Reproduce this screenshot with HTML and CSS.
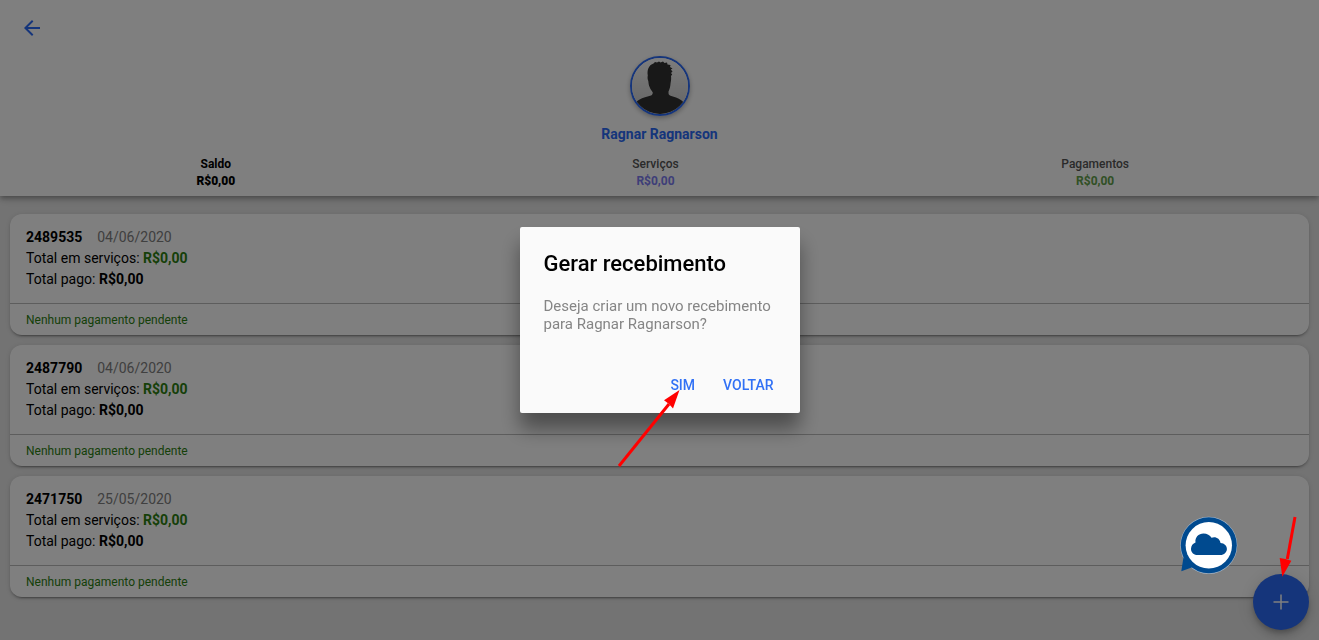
FILE: index.html
```html
<!DOCTYPE html>
<html lang="pt-BR">
<head>
  <meta charset="UTF-8">
  <meta name="viewport" content="width=device-width, initial-scale=1">
  <title>Ragnar Ragnarson</title>
  <link rel="stylesheet" href="styles.css">
</head>
<body>
  <header class="header">
    <div class="toolbar">
      <button class="back-button" type="button" aria-label="Voltar">
        <svg width="24" height="24" viewBox="0 0 24 24"><path d="M20 11H7.83l5.59-5.59L12 4l-8 8 8 8 1.41-1.41L7.83 13H20v-2z"/></svg>
      </button>
    </div>
    <div class="profile">
      <svg class="avatar" viewBox="0 0 56 56">
        <defs>
          <linearGradient id="avatar-bg" x1="0" y1="0" x2="0" y2="1">
            <stop offset="0" stop-color="#fafafa"/>
            <stop offset="1" stop-color="#c8c8c8"/>
          </linearGradient>
        </defs>
        <rect width="56" height="56" fill="url(#avatar-bg)"/>
        <path fill="#303030" d="M3 56V46C5 42 9 40.500 13 39.200L19 37.500C20.500 36.800 20.800 35.500 20.800 34.500C19.500 32.500 18.300 31 17.600 29C16.800 27.500 16.500 25 16.300 23C15.600 21.500 15.300 19.500 15.800 17.500C15 13 16.200 8.500 19.500 6.500L21.500 5.500L23 4L25 4.500L27 3.500L28.500 4.500L31 3.600L32.500 5L35 4.600L35.500 6.500L38.500 7L38 9L40.500 10.500L38.800 11.500L40.500 13.500L39 15L40.200 16.500L39 18C39.400 20 39 23.500 38.600 25C38.400 28 37.800 31 36.500 33.500V35C36.500 36.500 37.200 37.300 38.500 37.800L44 39.500C48 41 51 43 53 46V56Z"/>
      </svg>
      <h1 class="profile-name">Ragnar Ragnarson</h1>
    </div>
    <div class="stats">
      <div class="stat stat-balance"><span>Saldo</span><strong>R$0,00</strong></div>
      <div class="stat stat-services"><span>Serviços</span><strong>R$0,00</strong></div>
      <div class="stat stat-payments"><span>Pagamentos</span><strong>R$0,00</strong></div>
    </div>
  </header>

  <main class="list">
    <article class="card">
      <div class="card-body">
        <p><strong>2489535</strong><span class="date">04/06/2020</span></p>
        <p>Total em serviços: <strong class="green">R$0,00</strong></p>
        <p>Total pago: <strong>R$0,00</strong></p>
      </div>
      <div class="card-footer">Nenhum pagamento pendente</div>
    </article>
    <article class="card">
      <div class="card-body">
        <p><strong>2487790</strong><span class="date">04/06/2020</span></p>
        <p>Total em serviços: <strong class="green">R$0,00</strong></p>
        <p>Total pago: <strong>R$0,00</strong></p>
      </div>
      <div class="card-footer">Nenhum pagamento pendente</div>
    </article>
    <article class="card">
      <div class="card-body">
        <p><strong>2471750</strong><span class="date">25/05/2020</span></p>
        <p>Total em serviços: <strong class="green">R$0,00</strong></p>
        <p>Total pago: <strong>R$0,00</strong></p>
      </div>
      <div class="card-footer">Nenhum pagamento pendente</div>
    </article>
  </main>

  <button class="fab" type="button" aria-label="Adicionar">
    <svg width="16" height="16" viewBox="0 0 16 16"><path d="M8 0.500V15.500M0.500 8H15.500"/></svg>
  </button>

  <!-- Confirmation alert -->
  <div class="backdrop">
    <div class="alert" role="dialog" aria-modal="true" aria-labelledby="alert-title">
      <h2 class="alert-title" id="alert-title">Gerar recebimento</h2>
      <p class="alert-message">Deseja criar um novo recebimento para Ragnar Ragnarson?</p>
      <div class="alert-buttons">
        <button type="button">SIM</button>
        <button type="button">VOLTAR</button>
      </div>
      <svg class="arrow arrow-confirm" width="66" height="80" viewBox="0 0 66 80">
        <path class="arrow-line" d="M4 77L54 15"/>
        <path class="arrow-head" d="M64.500 1L49 11.300L54 15L58 19.500Z"/>
      </svg>
    </div>
  </div>

  <button class="chat-button" type="button" aria-label="Chat">
    <svg width="60" height="60" viewBox="0 0 60 60">
      <circle cx="29.800" cy="29.300" r="28.500" fill="#a9bccf"/>
      <path fill="#004a8f" d="M4.500 41L2.300 55.200L14 51Z"/>
      <circle cx="29.800" cy="29.300" r="28" fill="#004a8f"/>
      <circle cx="29.800" cy="29.300" r="23.200" fill="#fff"/>
      <path fill="#004a8f" d="M18.500 39C14.500 39 12 36.300 12 33C12 29.700 14 27.300 16.500 26.500C15.800 21.500 19.500 17.600 24.500 17.600C28 17.600 31 19.300 32.500 21.700C36.500 20 41 22.500 41.500 27C45.500 27.300 47.900 29.800 47.900 33C47.900 36.300 45 39 41.500 39Z"/>
    </svg>
  </button>

  <svg class="arrow arrow-fab" width="20" height="64" viewBox="0 0 20 64">
    <path class="arrow-line" d="M17 3L9.300 45"/>
    <path class="arrow-head" d="M4.300 62.700L1.700 44L7.500 45L13.300 46.700Z"/>
  </svg>
</body>
</html>
```
FILE: styles.css
```css
* {
  box-sizing: border-box;
}
body {
  margin: 0;
  min-height: 100vh;
  background: #e6e6e6;
  color: #000;
  font-family: Roboto, sans-serif;
  font-size: 14px;
}
h1, h2, p {
  margin: 0;
}
button {
  padding: 0;
  border: none;
  background: none;
  font-family: inherit;
  cursor: pointer;
}
svg {
  display: block;
}

/* Header */
.header {
  position: relative;
  background: #fff;
  box-shadow: 0 2px 4px -1px rgba(0,0,0,0.2), 0 4px 5px 0 rgba(0,0,0,0.14), 0 1px 10px 0 rgba(0,0,0,0.12);
}
.toolbar {
  display: flex;
  align-items: center;
  height: 56px;
  padding: 0 20px;
}
.back-button {
  fill: #2b6af6;
}
.profile {
  display: flex;
  flex-direction: column;
  align-items: center;
  gap: 8px;
}
.avatar {
  width: 60px;
  height: 60px;
  border: 2px solid #2b6af6;
  border-radius: 50%;
  box-shadow: 0 2px 5px rgba(0,0,0,0.3);
}
.profile-name {
  color: #2b6af6;
  font-size: 14px;
  font-weight: 700;
  line-height: 20px;
}
.stats {
  display: grid;
  grid-template-columns: repeat(3, 1fr);
  padding: 12px 0 6px;
}
.stat {
  display: flex;
  flex-direction: column;
  align-items: center;
  padding-right: 8px;
  color: #555;
  font-size: 12px;
  font-weight: 500;
  line-height: 17px;
}
.stat-balance {
  color: #000;
  font-weight: 700;
}
.stat-services strong {
  color: #7c7cf0;
}
.stat-payments strong {
  color: #62a04a;
}

/* Cards */
.list {
  display: flex;
  flex-direction: column;
  gap: 10px;
  padding: 18px 10px 42px;
}
.card {
  background: #fff;
  border-radius: 12px;
  box-shadow: 0 3px 1px -2px rgba(0,0,0,0.2), 0 2px 2px 0 rgba(0,0,0,0.14), 0 1px 5px 0 rgba(0,0,0,0.12);
}
.card-body {
  padding: 13px 16px;
  line-height: 21px;
}
.date {
  margin-left: 15px;
  color: #808080;
}
.green {
  color: #2c8010;
}
.card-footer {
  padding: 9px 16px 7px;
  border-top: 1px solid #bbb;
  color: #2c8010;
  font-size: 12px;
  line-height: 15px;
}

/* Floating button */
.fab {
  display: flex;
  align-items: center;
  justify-content: center;
  position: fixed;
  right: 10px;
  bottom: 10px;
  width: 56px;
  height: 56px;
  border-radius: 50%;
  background: #2b6af6;
  box-shadow: 0 3px 5px -1px rgba(0,0,0,0.2), 0 6px 10px 0 rgba(0,0,0,0.14), 0 1px 18px 0 rgba(0,0,0,0.12);
}
.fab path {
  stroke: #fff;
  stroke-width: 1.5;
}

/* Alert */
.backdrop {
  display: flex;
  align-items: center;
  justify-content: center;
  position: fixed;
  inset: 0;
  background: rgba(0,0,0,0.5);
}
.alert {
  position: relative;
  width: 280px;
  padding: 24px 0 10px;
  border-radius: 2px;
  background: #fafafa;
  box-shadow: 0 16px 20px rgba(0,0,0,0.4);
}
.alert-title {
  padding: 0 24px;
  font-size: 22px;
  font-weight: 500;
  line-height: 26px;
}
.alert-message {
  padding: 20px 24px 34px;
  color: #858585;
  font-size: 15px;
  line-height: 18px;
}
.alert-buttons {
  display: flex;
  justify-content: flex-end;
  gap: 8px;
  padding: 0 16px;
}
.alert-buttons button {
  padding: 10px;
  color: #3171f5;
  font-size: 14px;
  font-weight: 500;
  line-height: 16px;
}

/* Chat bubble and arrows, above the backdrop */
.chat-button {
  position: fixed;
  right: 80px;
  bottom: 64px;
}
.arrow {
  pointer-events: none;
}
.arrow-line {
  fill: none;
  stroke: #f00;
  stroke-width: 3;
}
.arrow-head {
  fill: #f00;
}
.arrow-confirm {
  position: absolute;
  top: 162px;
  left: 95px;
}
.arrow-fab {
  position: fixed;
  right: 21px;
  bottom: 62px;
}
```
